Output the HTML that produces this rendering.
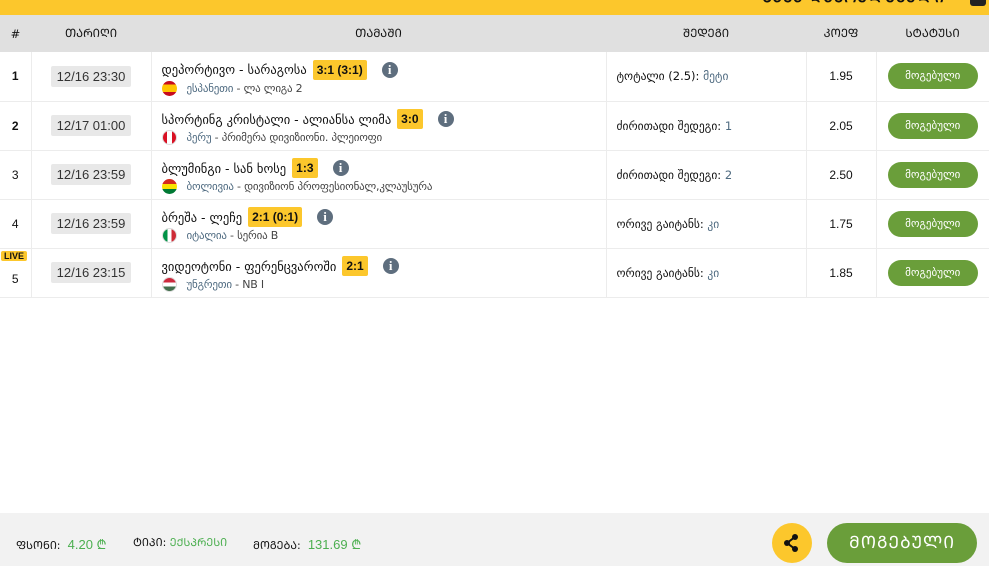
<!DOCTYPE html>
<html><head><meta charset="utf-8"><style>
*{margin:0;padding:0;box-sizing:border-box}
body{width:989px;height:566px;background:#fff;font-family:"DejaVu Sans","Liberation Sans",sans-serif;font-size:12px;color:#111;position:relative;overflow:hidden}
.top{position:absolute;left:0;top:0;width:989px;height:15px;background:#fcc72c;overflow:hidden}
.top .t{position:absolute;right:44px;top:-13px;font-size:15px;font-weight:bold;letter-spacing:1px}
.top .b{position:absolute;right:3px;top:-6px;width:16px;height:12px;background:#222;border-radius:3px}
table{position:absolute;top:15px;left:0;width:989px;border-collapse:collapse}
th{background:#e0e0e0;height:37px;font-weight:normal;font-size:11.5px}
td{height:49px;border-bottom:1px solid #ececec;border-right:1px solid #ececec;vertical-align:middle}
td:last-child{border-right:none}
.n{text-align:center;font-size:12px;position:relative;font-family:"Liberation Sans",sans-serif}
.d{text-align:center}
.dt{display:inline-block;background:#e8e8e8;padding:3px 6px;font-family:"Liberation Sans",sans-serif;font-size:13px;color:#333;border-radius:2px}
.gl1{display:flex;align-items:center;font-size:12.5px;padding-left:10px;height:22px;margin-top:2px}
.sc{background:#fcc72c;font-family:"Liberation Sans",sans-serif;font-weight:bold;font-size:12px;padding:3px 4px;margin-left:6px;border-radius:2px}
.i{display:inline-block;width:16px;height:16px;border-radius:50%;background:#5e6e7e;color:#fff;font-family:"Liberation Serif",serif;font-weight:bold;font-size:13px;text-align:center;line-height:16px;margin-left:15px}
.gl2{display:flex;align-items:center;font-size:11px;color:#444;letter-spacing:-0.2px}
.fl{width:15px;height:15px;border-radius:50%;margin-right:10px;display:inline-block}
.c{color:#4e6a80}
.r{padding-left:10px;font-size:11.5px}
.k{text-align:center;font-family:"Liberation Sans",sans-serif;font-size:12px}
.s{text-align:center}
.btn{display:inline-block;background:#6a9e3a;color:#fff;border-radius:13px;width:90px;height:26px;line-height:26px;font-size:11px}
.live{position:absolute;left:1px;top:2px;background:#fcc72c;font-family:"Liberation Sans",sans-serif;font-weight:bold;font-size:9px;padding:0 3px;border-radius:2px}
.foot{position:absolute;left:0;top:513px;width:989px;height:53px;background:#f2f2f2}
.fi{position:absolute;top:22px;font-size:11px}
.gr{color:#4caf50;font-family:"Liberation Sans",sans-serif;font-size:13px}
.sh{position:absolute;left:772px;top:10px;width:40px;height:40px;border-radius:50%;background:#fcc72c}
.wb{position:absolute;left:827px;top:10px;width:150px;height:40px;border-radius:20px;background:#6a9e3a;color:#fff;font-size:17px;text-align:center;line-height:40px;letter-spacing:1px}
</style></head><body>
<div class="top"><span class="t">ᲙᲐᲡᲐ ᲓᲐᲡᲠᲣᲚᲔᲑᲣᲚᲘ</span><span class="b"></span></div>
<table>
<tr><th style="width:31px">#</th><th style="width:120px">ᲗᲐᲠᲘᲦᲘ</th><th style="width:455px">ᲗᲐᲛᲐᲨᲘ</th><th style="width:200px">ᲨᲔᲓᲔᲒᲘ</th><th style="width:70px">ᲙᲝᲔᲤ</th><th>ᲡᲢᲐᲢᲣᲡᲘ</th></tr>
<tr><td class="n"><b>1</b></td><td class="d"><span class="dt">12/16 23:30</span></td><td><div class="gl1">დეპორტივო - სარაგოსა<span class="sc">3:1 (3:1)</span><span class="i">i</span></div><div class="gl2" style="padding-left:10px"><span class="fl" style="background:linear-gradient(#c60b1e 25%,#ffc400 25% 75%,#c60b1e 75%)"></span><span class="c">ესპანეთი</span>&nbsp;- ლა ლიგა 2</div></td><td class="r">ტოტალი (2.5): <span class="c">მეტი</span></td><td class="k">1.95</td><td class="s"><span class="btn">მოგებული</span></td></tr>
<tr><td class="n"><b>2</b></td><td class="d"><span class="dt">12/17 01:00</span></td><td><div class="gl1">სპორტინგ კრისტალი - ალიანსა ლიმა<span class="sc">3:0</span><span class="i">i</span></div><div class="gl2" style="padding-left:10px"><span class="fl" style="background:linear-gradient(90deg,#d91023 30%,#fff 30% 70%,#d91023 70%);border:1px solid #ddd"></span><span class="c">პერუ</span>&nbsp;- პრიმერა დივიზიონი. პლეიოფი</div></td><td class="r">ძირითადი შედეგი: <span class="c">1</span></td><td class="k">2.05</td><td class="s"><span class="btn">მოგებული</span></td></tr>
<tr><td class="n">3</td><td class="d"><span class="dt">12/16 23:59</span></td><td><div class="gl1">ბლუმინგი - სან ხოსე<span class="sc">1:3</span><span class="i">i</span></div><div class="gl2" style="padding-left:10px"><span class="fl" style="background:linear-gradient(#d52b1e 33%,#f9e300 33% 66%,#007934 66%)"></span><span class="c">ბოლივია</span>&nbsp;- დივიზიონ პროფესიონალ,კლაუსურა</div></td><td class="r">ძირითადი შედეგი: <span class="c">2</span></td><td class="k">2.50</td><td class="s"><span class="btn">მოგებული</span></td></tr>
<tr><td class="n">4</td><td class="d"><span class="dt">12/16 23:59</span></td><td><div class="gl1">ბრეშა - ლეჩე<span class="sc">2:1 (0:1)</span><span class="i">i</span></div><div class="gl2" style="padding-left:10px"><span class="fl" style="background:linear-gradient(90deg,#009246 33%,#fff 33% 66%,#ce2b37 66%);border:1px solid #ddd"></span><span class="c">იტალია</span>&nbsp;- სერია B</div></td><td class="r">ორივე გაიტანს: <span class="c">კი</span></td><td class="k">1.75</td><td class="s"><span class="btn">მოგებული</span></td></tr>
<tr><td class="n"><span class="live">LIVE</span><span style="position:relative;top:6px">5</span></td><td class="d"><span class="dt">12/16 23:15</span></td><td><div class="gl1">ვიდეოტონი - ფერენცვაროში<span class="sc">2:1</span><span class="i">i</span></div><div class="gl2" style="padding-left:10px"><span class="fl" style="background:linear-gradient(#cd2a3e 33%,#fff 33% 66%,#436f4d 66%);border:1px solid #ddd"></span><span class="c">უნგრეთი</span>&nbsp;- NB I</div></td><td class="r">ორივე გაიტანს: <span class="c">კი</span></td><td class="k">1.85</td><td class="s"><span class="btn">მოგებული</span></td></tr>
</table>
<div class="foot">
<span class="fi" style="left:16px">ᲤᲡᲝᲜᲘ: <span class="gr">&nbsp;4.20 ₾</span></span>
<span class="fi" style="left:133px">ᲢᲘᲞᲘ: <span class="gr" style="font-family:'DejaVu Sans',sans-serif;font-size:11px">ᲔᲥᲡᲞᲠᲔᲡᲘ</span></span>
<span class="fi" style="left:253px">ᲛᲝᲒᲔᲑᲐ: <span class="gr">&nbsp;131.69 ₾</span></span>
<div class="sh"><svg width="40" height="40" viewBox="0 0 40 40"><circle cx="23" cy="14" r="3" fill="#111"/><circle cx="15" cy="20" r="3" fill="#111"/><circle cx="23" cy="26" r="3" fill="#111"/><path d="M23 14L15 20L23 26" stroke="#111" stroke-width="2" fill="none"/></svg></div>
<div class="wb">ᲛᲝᲒᲔᲑᲣᲚᲘ</div>
</div>
</body></html>
